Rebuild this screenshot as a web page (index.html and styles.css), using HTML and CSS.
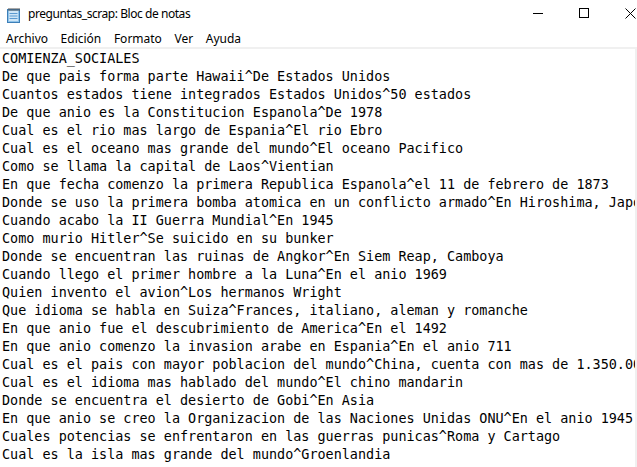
FILE: index.html
```html
<!DOCTYPE html>
<html lang="es">
<head>
<meta charset="utf-8">
<title>preguntas_scrap: Bloc de notas</title>
<link rel="stylesheet" href="styles.css">
</head>
<body>
<div class="window">
  <div class="titlebar">
    <svg class="app-icon" width="16" height="16" viewBox="0 0 16 16">
      <rect x="1.5" y="2.5" width="12" height="13" fill="#8fc3ea" stroke="#3d7fb8"/>
      <rect x="3" y="4" width="9" height="10" fill="#cfe6f7"/>
      <line x1="3.5" y1="6.5" x2="11.5" y2="6.5" stroke="#5b9ad0"/>
      <line x1="3.5" y1="9" x2="11.5" y2="9" stroke="#5b9ad0"/>
      <line x1="3.5" y1="11.5" x2="11.5" y2="11.5" stroke="#5b9ad0"/>
      <path d="M3 1v3M5 1v3M7 1v3M9 1v3M11 1v3M13 1v3" stroke="#555" stroke-width="1"/>
    </svg>
    <span class="title">preguntas_scrap: Bloc de notas</span>
    <div class="controls">
      <div class="ctl">
        <svg width="10" height="10" viewBox="0 0 10 10"><line x1="0" y1="5.5" x2="10" y2="5.5" stroke="#000"/></svg>
      </div>
      <div class="ctl">
        <svg width="10" height="10" viewBox="0 0 10 10"><rect x="0.5" y="0.5" width="9" height="9" fill="none" stroke="#000"/></svg>
      </div>
      <div class="ctl">
        <svg width="11" height="11" viewBox="0 0 11 11"><path d="M0.5 0.5L10.5 10.5M10.5 0.5L0.5 10.5" stroke="#000" stroke-width="1"/></svg>
      </div>
    </div>
  </div>
  <div class="menubar">
    <span class="menu-item">Archivo</span>
    <span class="menu-item">Edición</span>
    <span class="menu-item">Formato</span>
    <span class="menu-item">Ver</span>
    <span class="menu-item">Ayuda</span>
  </div>
  <div class="editor">
    <pre class="text">COMIENZA_SOCIALES
De que pais forma parte Hawaii^De Estados Unidos
Cuantos estados tiene integrados Estados Unidos^50 estados
De que anio es la Constitucion Espanola^De 1978
Cual es el rio mas largo de Espania^El rio Ebro
Cual es el oceano mas grande del mundo^El oceano Pacifico
Como se llama la capital de Laos^Vientian
En que fecha comenzo la primera Republica Espanola^el 11 de febrero de 1873
Donde se uso la primera bomba atomica en un conflicto armado^En Hiroshima, Japon
Cuando acabo la II Guerra Mundial^En 1945
Como murio Hitler^Se suicido en su bunker
Donde se encuentran las ruinas de Angkor^En Siem Reap, Camboya
Cuando llego el primer hombre a la Luna^En el anio 1969
Quien invento el avion^Los hermanos Wright
Que idioma se habla en Suiza^Frances, italiano, aleman y romanche
En que anio fue el descubrimiento de America^En el 1492
En que anio comenzo la invasion arabe en Espania^En el anio 711
Cual es el pais con mayor poblacion del mundo^China, cuenta con mas de 1.350.000.000
Cual es el idioma mas hablado del mundo^El chino mandarin
Donde se encuentra el desierto de Gobi^En Asia
En que anio se creo la Organizacion de las Naciones Unidas ONU^En el anio 1945
Cuales potencias se enfrentaron en las guerras punicas^Roma y Cartago
Cual es la isla mas grande del mundo^Groenlandia</pre>
    <div class="scrollbar">
      <div class="thumb"></div>
    </div>
  </div>
</div>
</body>
</html>
```

FILE: styles.css
```css
html, body {
  margin: 0;
  padding: 0;
  overflow: hidden;
  background: #ffffff;
}

.window {
  width: 653px;
  height: 467px;
  display: flex;
  flex-direction: column;
  background: #ffffff;
  font-family: "Noto Sans", "Open Sans", sans-serif;
  color: #000;
}

.titlebar {
  height: 30px;
  display: flex;
  align-items: center;
  flex-shrink: 0;
}

.app-icon {
  margin-left: 6px;
  margin-right: 6px;
  flex-shrink: 0;
}

.title {
  font-size: 12px;
  letter-spacing: -0.45px;
  line-height: 16px;
  margin-top: -2px;
}

.controls {
  margin-left: auto;
  display: flex;
  height: 30px;
}

.ctl {
  width: 46px;
  height: 30px;
  display: flex;
  align-items: center;
  justify-content: center;
  flex-shrink: 0;
  padding-bottom: 4px;
  box-sizing: border-box;
}

.menubar {
  height: 17px;
  display: flex;
  align-items: center;
  flex-shrink: 0;
  gap: 0.6px;
}

.menu-item {
  font-size: 12px;
  letter-spacing: 0;
  padding: 0 6px;
  line-height: 17px;
}

.editor {
  flex: 1;
  display: flex;
  border-top: 2px solid #f0f0f0;
  min-height: 0;
}

.text {
  flex: 1;
  margin: 0;
  padding: 1px 0 0 2px;
  font-family: "DejaVu Sans Mono", "Liberation Mono", monospace;
  font-size: 13.45px;
  line-height: 18px;
  white-space: pre;
  overflow: hidden;
  border-right: 1px solid #f0f0f0;
}

.scrollbar {
  width: 17px;
  flex-shrink: 0;
  background: #f0f0f0;
  padding-top: 16px;
  box-sizing: border-box;
}

.thumb {
  margin-left: 1px;
  width: 15px;
  height: 393px;
  background: #cdcdcd;
}
```
